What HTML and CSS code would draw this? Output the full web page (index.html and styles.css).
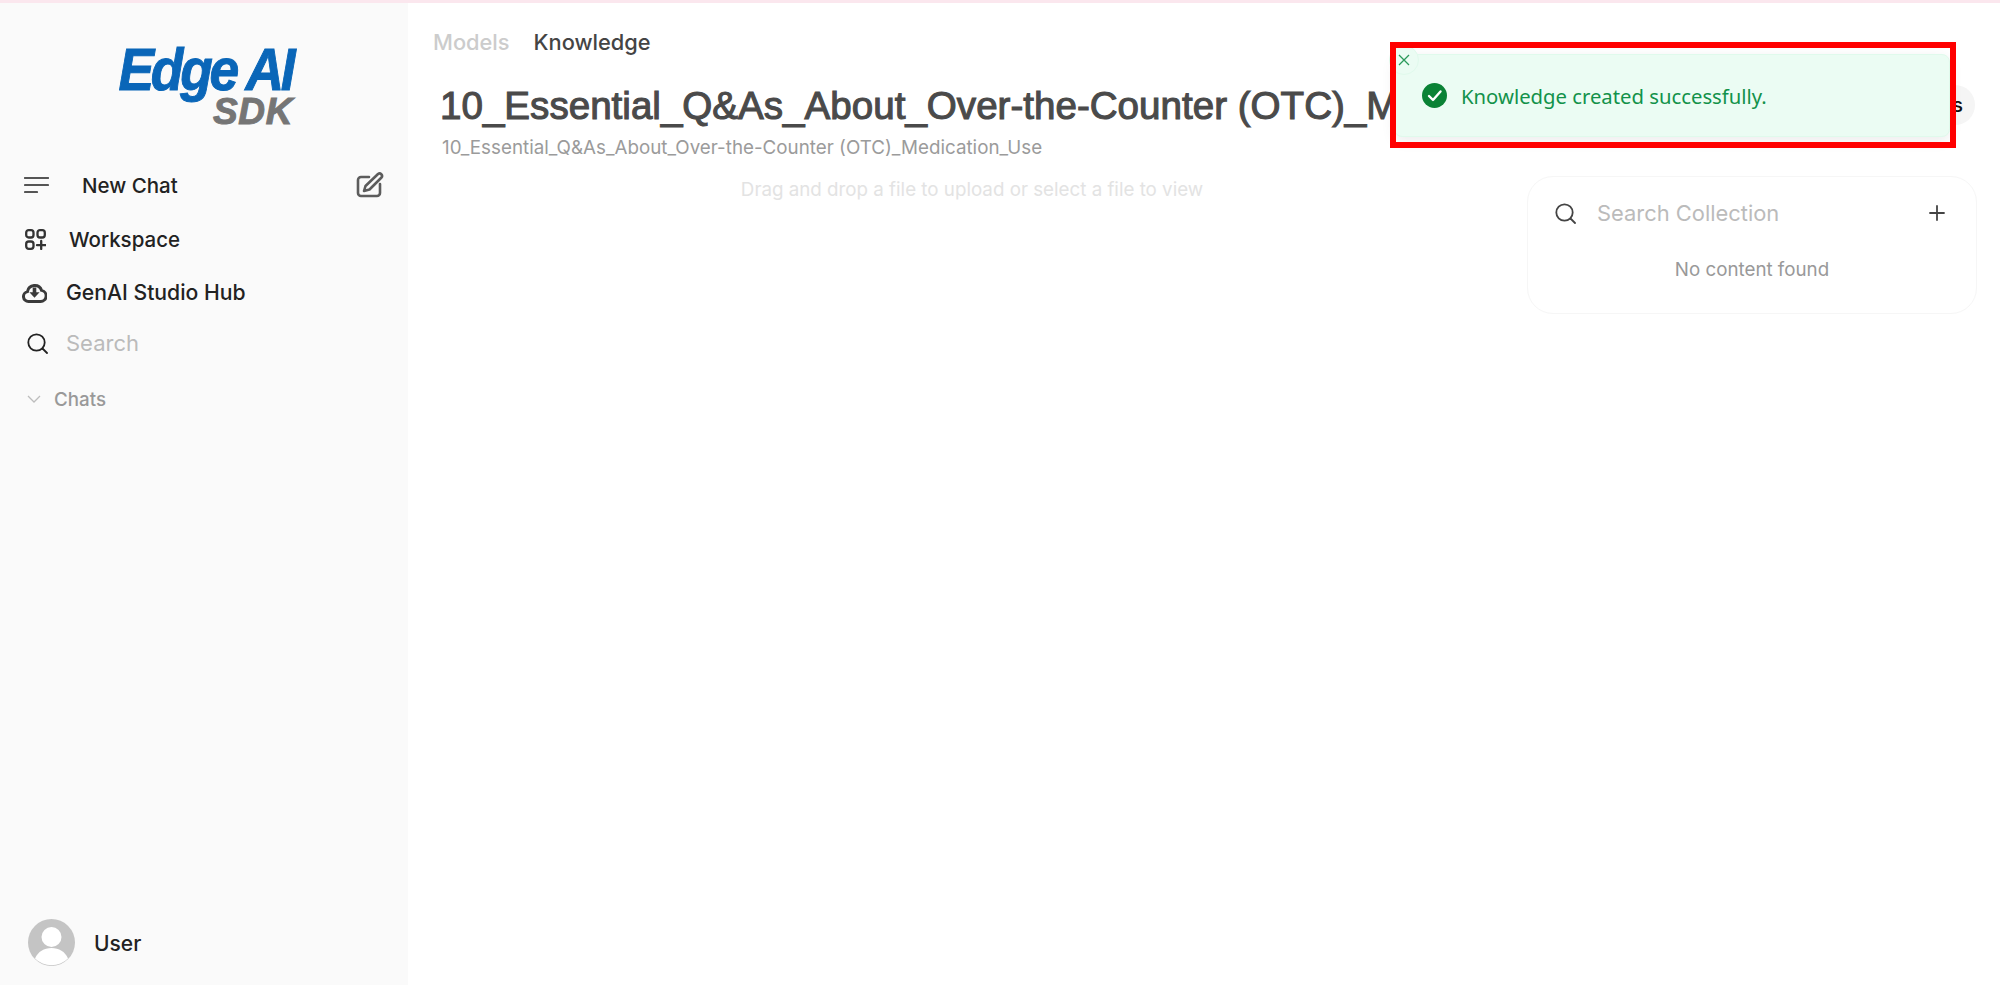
FILE: index.html
```html
<!DOCTYPE html>
<html lang="en">
<head>
<meta charset="utf-8">
<title>Knowledge</title>
<link rel="stylesheet" href="styles.css">
</head>
<body>
<div class="app">
  <aside class="sidebar">
    <div class="logo">
      <span class="logo-edge">Edge AI</span>
      <span class="logo-sdk">SDK</span>
    </div>
    <div class="row row-new">
      <svg class="ic-menu" viewBox="0 0 25 16" fill="none" stroke="#555" stroke-width="2.200" stroke-linecap="round"><path d="M1 1h23M1 8h23M1 15h12"/></svg>
      <span class="new-label">New Chat</span>
      <svg class="ic-edit" viewBox="0 0 30 28" fill="none" stroke="#5c5c5c" stroke-width="2.600" stroke-linecap="round" stroke-linejoin="round"><path d="M8 20l1.500-5L22 3a2.500 2.500 0 0 1 3.500 3.500L13.500 18.500z"/><path d="M13 6H5a3 3 0 0 0-3 3v13a3 3 0 0 0 3 3h16a3 3 0 0 0 3-3v-9"/></svg>
    </div>
    <div class="row row-work">
      <svg class="ic-work" viewBox="0 0 21 21" fill="none" stroke="#333" stroke-width="2.300" stroke-linecap="round"><rect x="1.200" y="1.200" width="7.300" height="7.300" rx="2.500"/><rect x="12.500" y="1.200" width="7.300" height="7.300" rx="2.500"/><rect x="1.200" y="12.500" width="7.300" height="7.300" rx="2.500"/><path d="M16.200 12v8M12 16.200h8.500"/></svg>
      <span>Workspace</span>
    </div>
    <div class="row row-hub">
      <svg class="ic-cloud" viewBox="0 0 25 21"><path fill="none" stroke="#3a3a3a" stroke-width="3" d="M6.500 19.500a5 5 0 0 1-1-9.900 7.300 7.300 0 0 1 14.100-1.200 5.600 5.600 0 0 1-1 11.100z"/><path fill="#3a3a3a" d="M10.700 5.500h3.600v4.700h3.300l-5.100 5.600-5.100-5.600h3.300z"/></svg>
      <span>GenAI Studio Hub</span>
    </div>
    <div class="row row-search">
      <svg class="ic-search" viewBox="0 0 21 21" fill="none" stroke="#222" stroke-width="1.800" stroke-linecap="round"><circle cx="9.500" cy="9.500" r="8.200"/><path d="M15.500 15.500l4.500 4.500"/></svg>
      <span class="muted">Search</span>
    </div>
    <div class="row row-chats">
      <svg class="ic-chev" viewBox="0 0 14 8" fill="none" stroke="#bdbdbd" stroke-width="1.300"><path d="M1 1l6 6 6-6"/></svg>
      <span>Chats</span>
    </div>
    <div class="row row-user">
      <svg class="avatar" viewBox="0 0 47 47"><circle cx="23.500" cy="23.500" r="23.500" fill="#c4c4c4"/><circle cx="23.500" cy="18" r="10" fill="#fff"/><path fill="#fff" d="M7 39.500c3-7 9-10.500 16.500-10.500S37 32.500 40 39.500A23.500 23.500 0 0 1 7 39.500z"/></svg>
      <span class="user-name">User</span>
    </div>
  </aside>
  <main class="main">
    <nav class="tabs">
      <span class="tab-off">Models</span>
      <span class="tab-on">Knowledge</span>
    </nav>
    <div class="head">
      <div class="head-text">
        <h1 class="title">10_Essential_Q&amp;As_About_Over-the-Counter (OTC)_Medication_Use</h1>
        <p class="sub">10_Essential_Q&amp;As_About_Over-the-Counter (OTC)_Medication_Use</p>
      </div>
      <button class="pill">Access</button>
    </div>
    <div class="body">
      <div class="drop">Drag and drop a file to upload or select a file to view</div>
      <section class="card">
        <div class="card-top">
          <svg class="ic-search2" viewBox="0 0 21 21" fill="none" stroke="#444" stroke-width="1.800" stroke-linecap="round"><circle cx="9.500" cy="9.500" r="8.200"/><path d="M15.500 15.500l4.500 4.500"/></svg>
          <span class="card-ph">Search Collection</span>
          <svg class="ic-plus" viewBox="0 0 16 16" fill="none" stroke="#444" stroke-width="1.800" stroke-linecap="round"><path d="M8 1v14M1 8h14"/></svg>
        </div>
        <div class="empty">No content found</div>
      </section>
    </div>
  </main>
</div>
<div class="toast">
  <span class="toast-close"><svg viewBox="0 0 12 12" fill="none" stroke="#2a9a5a" stroke-width="1.300"><path d="M1 1l10 10M11 1L1 11"/></svg></span>
  <svg class="ic-check" viewBox="0 0 25 25"><circle cx="12.500" cy="12.500" r="12.500" fill="#0a8235"/><path d="M7 13l4 4 7.500-8.500" fill="none" stroke="#fff" stroke-width="2.400" stroke-linecap="round" stroke-linejoin="round"/></svg>
  <span class="toast-msg">Knowledge created successfully.</span>
</div>
<div class="mark"></div>
</body>
</html>
```
FILE: styles.css
```css
* { box-sizing: border-box; }
html, body { margin: 0; height: 100%; overflow: hidden; background: #fff; }
body { font-family: Inter, "Liberation Sans", sans-serif; color: #222; }
.app { display: flex; height: 985px; border-top: 3px solid #fbe7ee; }
.sidebar { width: 408px; flex: none; background: #fafafa; display: flex; flex-direction: column; font-size: 20.500px; color: #222; }
.logo { height: 165px; display: flex; flex-direction: column; align-items: flex-end; padding: 37px 116px 0 0; font-family: "Liberation Sans", sans-serif; font-style: italic; font-weight: 700; }
.logo-edge { font-size: 60px; line-height: 60px; letter-spacing: -3.700px; color: #0a66b8; white-space: nowrap; transform: scaleX(.89); transform-origin: right center; -webkit-text-stroke: 1px #0a66b8; }
.logo-sdk { font-size: 37px; line-height: 30px; margin-top: -3px; margin-right: -1px; letter-spacing: .6px; color: #757575; -webkit-text-stroke: 1px #757575; }
.row { display: flex; align-items: center; }
.row-new { height: 34px; padding: 0 22px 0 24px; }
.new-label { margin-left: 33px; font-weight: 500; flex: 1; }
.ic-menu { width: 25px; height: 16px; }
.ic-edit { width: 30px; height: 28px; }
.row-work { margin-top: 20px; height: 34px; padding-left: 25px; gap: 23px; font-weight: 500; }
.ic-work { width: 21px; height: 21px; }
.row-hub { margin-top: 19px; height: 34px; padding-left: 22px; gap: 19px; font-weight: 500; font-size: 21.200px; }
.ic-cloud { width: 25px; height: 21px; }
.row-search { margin-top: 17px; height: 34px; padding-left: 27px; gap: 18px; font-size: 22px; }
.ic-search { width: 21px; height: 21px; }
.muted { color: #bbb; }
.row-chats { margin-top: 27px; height: 24px; padding-left: 27px; gap: 13px; font-size: 18.750px; color: #999; font-weight: 500; }
.ic-chev { width: 14px; height: 8px; }
.row-user { margin-top: auto; margin-bottom: 19px; padding-left: 28px; gap: 19px; font-weight: 500; font-size: 21px; }
.user-name { padding-top: 2px; }
.avatar { width: 47px; height: 47px; }
.main { flex: 1; min-width: 0; padding: 23px 23px 0 25px; }
.tabs { display: flex; gap: 24px; font-size: 21.800px; font-weight: 500; line-height: 32px; }
.tab-off { color: #ccc; }
.tab-on { color: #444; }
.head { display: flex; align-items: flex-start; margin-top: 20px; padding-left: 7px; gap: 16px; }
.head-text { flex: 1; min-width: 0; overflow: hidden; padding-top: 6px; }
.title { margin: 0; font-family: "Liberation Sans", sans-serif; font-size: 38.600px; line-height: 44px; font-weight: 400; color: #4a4a4a; -webkit-text-stroke: 1.100px #4a4a4a; white-space: nowrap; }
.sub { margin: 8px 0 0 2px; font-size: 18.800px; line-height: 24px; color: #9b9b9b; white-space: nowrap; }
.pill { margin: 7px 2px 0 0; height: 40px; padding: 0 12px 0 20px; border: 0; border-radius: 20px; background: #f5f5f5; font: 500 20px Inter, sans-serif; color: #111; }
.body { display: flex; align-items: flex-start; }
.drop { flex: 1; min-width: 0; padding-right: 16px; margin-top: 18px; text-align: center; font-size: 18.750px; line-height: 24px; color: #e3e3e3; }
.card { width: 450px; flex: none; height: 138px; margin-top: 16px; border: 1px solid #f6f6f6; border-radius: 26px; padding: 19px 31px 0 27px; }
.card-top { display: flex; align-items: center; height: 34px; }
.ic-search2 { width: 21px; height: 21px; }
.card-ph { margin-left: 21px; flex: 1; font-size: 21.900px; color: #bbb; }
.ic-plus { width: 16px; height: 16px; }
.empty { margin: 28px 0 0 4px; text-align: center; font-size: 18.750px; line-height: 24px; color: #999; }
.toast { position: absolute; left: 1394px; top: 54px; width: 556px; height: 83px; display: flex; align-items: center; padding: 0 0 0 27px; gap: 14px; background: #ebfcf3; border: 1px solid #e0faec; border-radius: 8px; box-shadow: 0 4px 14px rgba(0,0,0,.08); }
.toast-close { position: absolute; left: -6px; top: -10px; width: 30px; height: 30px; border-radius: 50%; background: #ebfcf3; border: 1px solid #e0faec; display: flex; align-items: center; justify-content: center; }
.toast-close svg { width: 12px; height: 12px; }
.ic-check { width: 25px; height: 25px; flex: none; }
.toast-msg { font-family: "Noto Sans", sans-serif; font-size: 20.300px; color: #12924a; }
.mark { position: absolute; left: 1390px; top: 42px; width: 566px; height: 106px; border: 6px solid #f00; }
```
